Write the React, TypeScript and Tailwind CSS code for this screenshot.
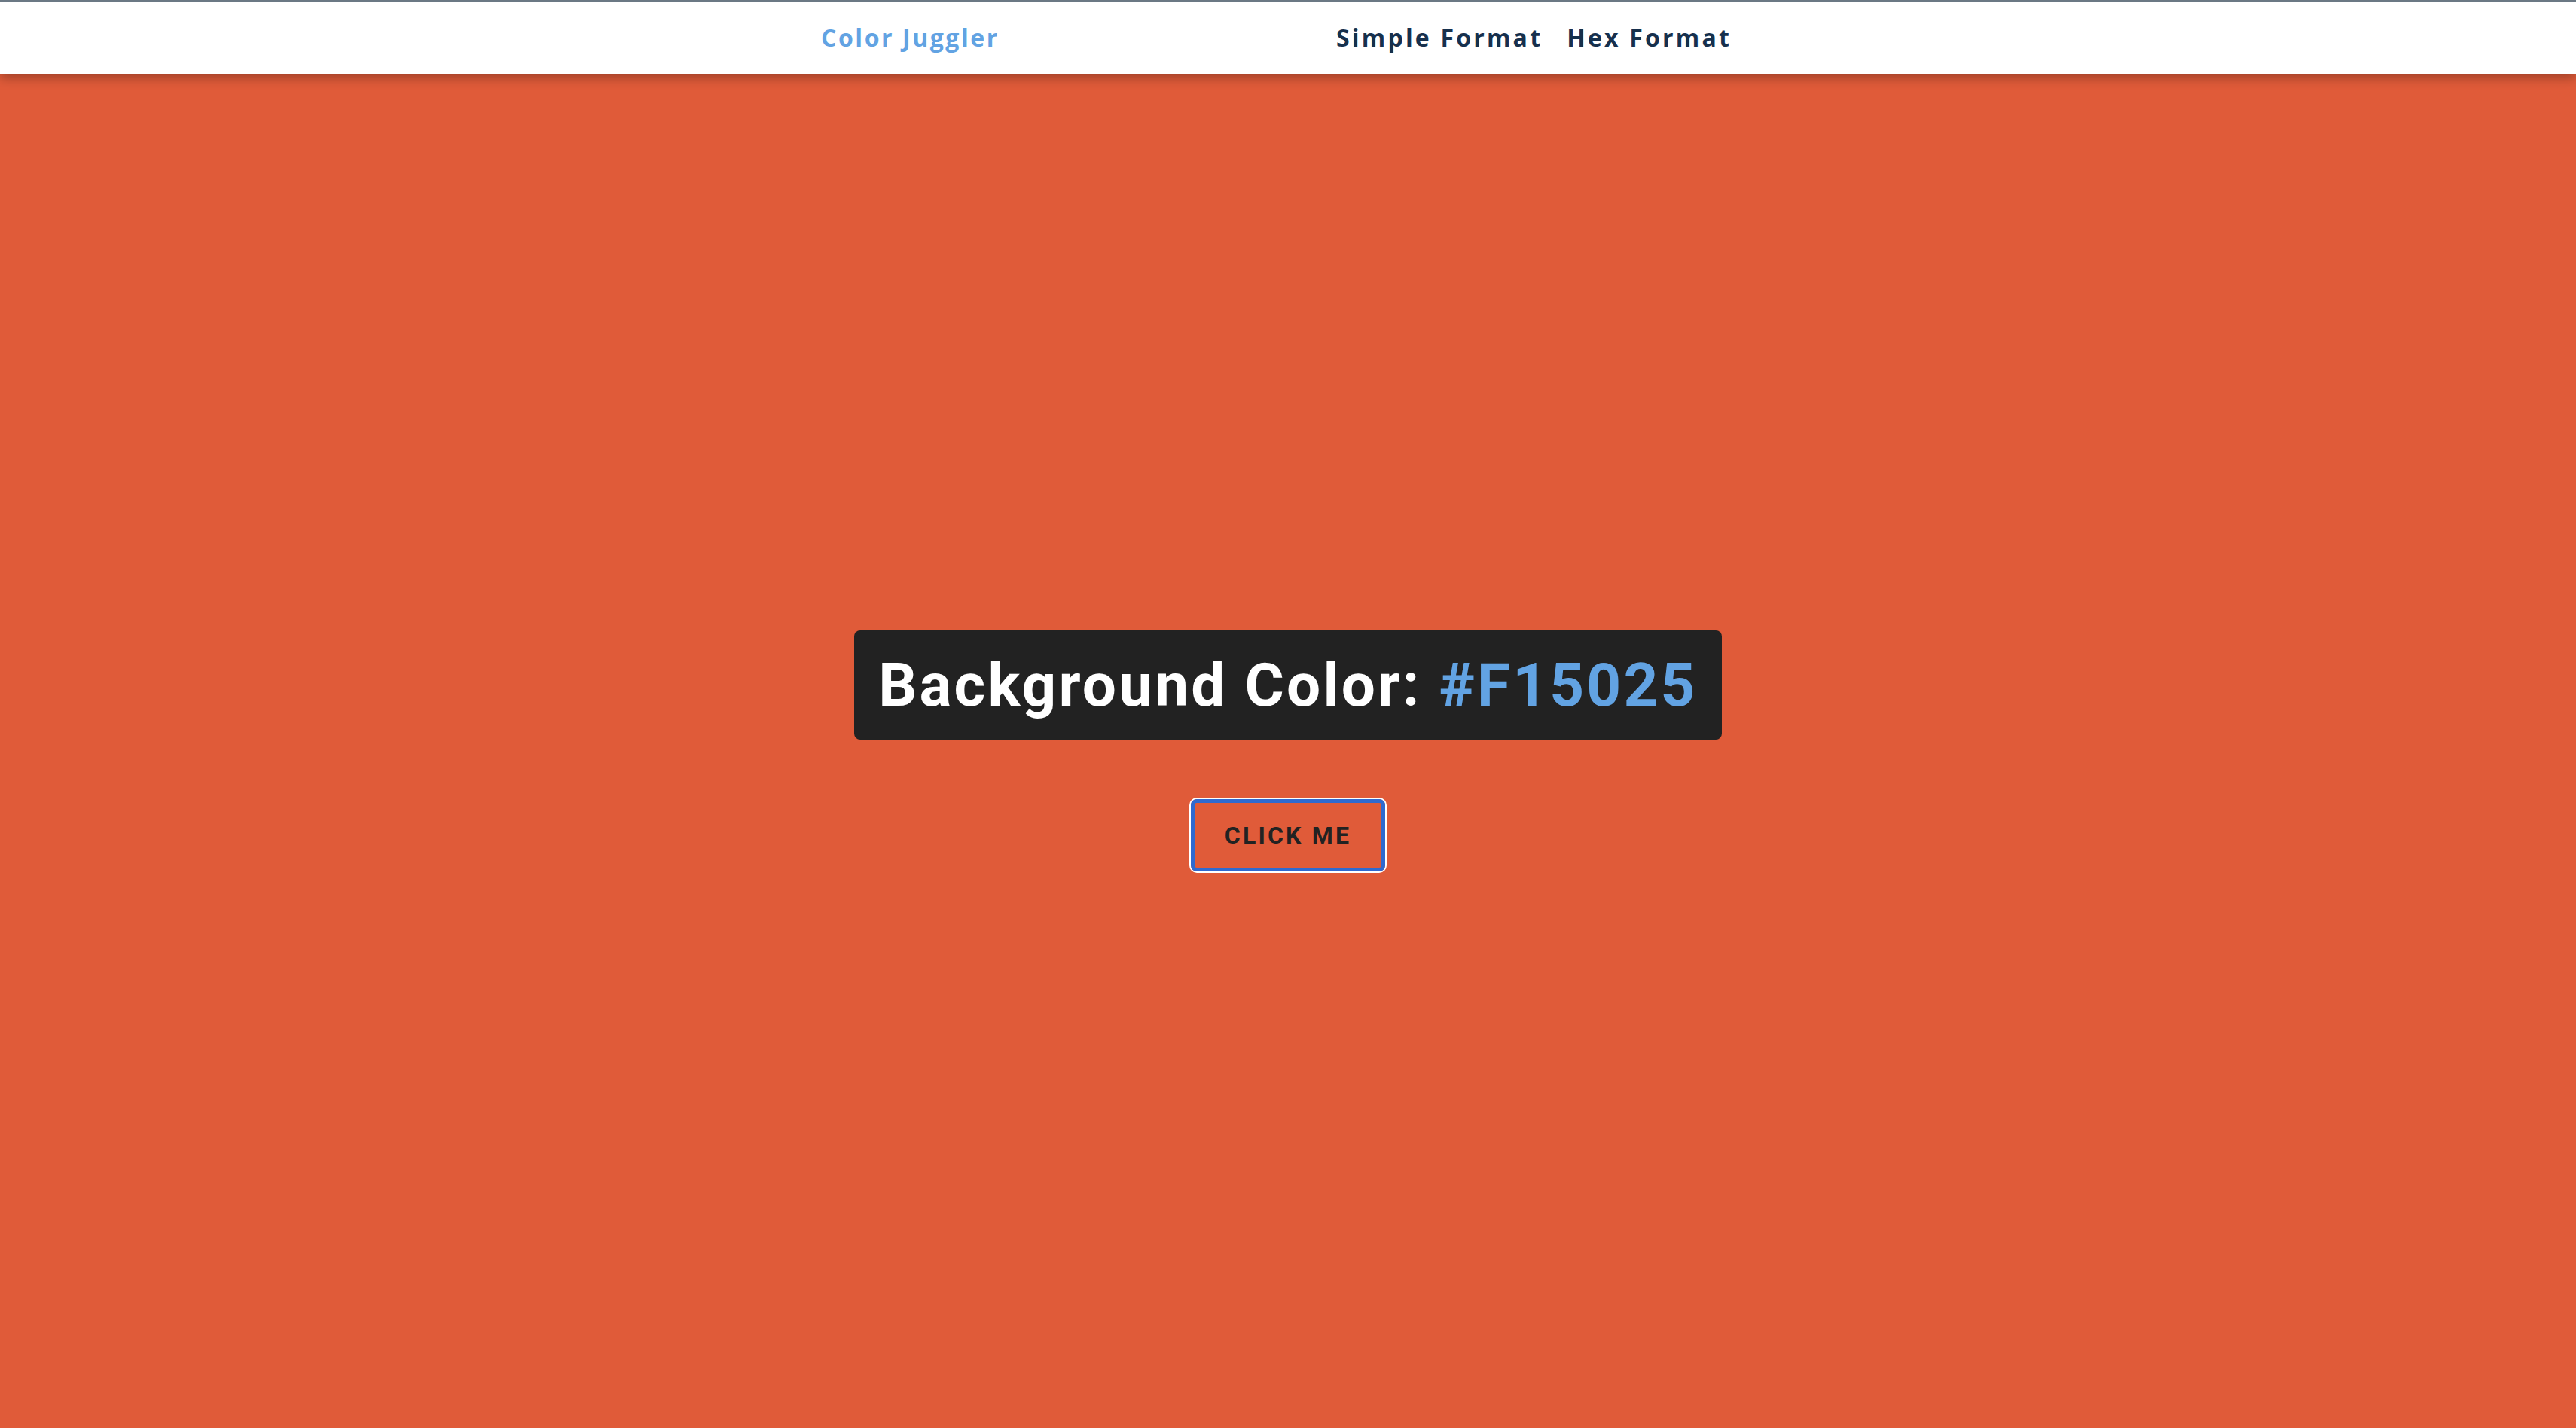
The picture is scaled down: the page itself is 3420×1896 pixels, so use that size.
import { useState } from 'react'

const colors = ['#F15025', '#2E86AB', '#7FB069', '#E8C547', '#6A4C93']

function NavBar() {
  return (
    <nav className="h-[98px] bg-white border-t-2 border-[#6b7884] shadow-[0_6px_14px_rgba(0,0,0,0.28)] relative z-10 flex justify-center">
      <div className="w-[1240px] flex items-center justify-between font-['Open_Sans',sans-serif] font-bold text-[32px] tracking-[0.1em]">
        <a className="text-[#62a3e3] tracking-[0.08em]">Color Juggler</a>
        <div className="flex gap-[32px] pr-[31px] text-[#16304d]">
          <a>Simple Format</a>
          <a>Hex Format</a>
        </div>
      </div>
    </nav>
  )
}

export default function App() {
  const [index, setIndex] = useState(0)
  const color = colors[index]

  return (
    <div className="h-[1896px] flex flex-col font-['Roboto',sans-serif]" style={{ backgroundColor: '#e05b39' }}>
      <NavBar />
      <main className="flex-1 flex flex-col items-center pt-[739px]">
        <h2 className="bg-[#222222] rounded-lg h-[145px] w-[1152px] flex items-center justify-center text-[80px] font-bold text-white tracking-[0.04em]">
          Background Color:&nbsp;<span className="text-[#62a3e3]">{color}</span>
        </h2>
        <button
          onClick={() => setIndex((index + 1) % colors.length)}
          className="mt-[79px] w-[258px] h-[96px] rounded-lg border-[5px] border-[#2f6ad0] ring-2 ring-white text-[#222222] font-bold text-[32px] tracking-[0.1em] uppercase"
        >
          Click me
        </button>
      </main>
    </div>
  )
}
